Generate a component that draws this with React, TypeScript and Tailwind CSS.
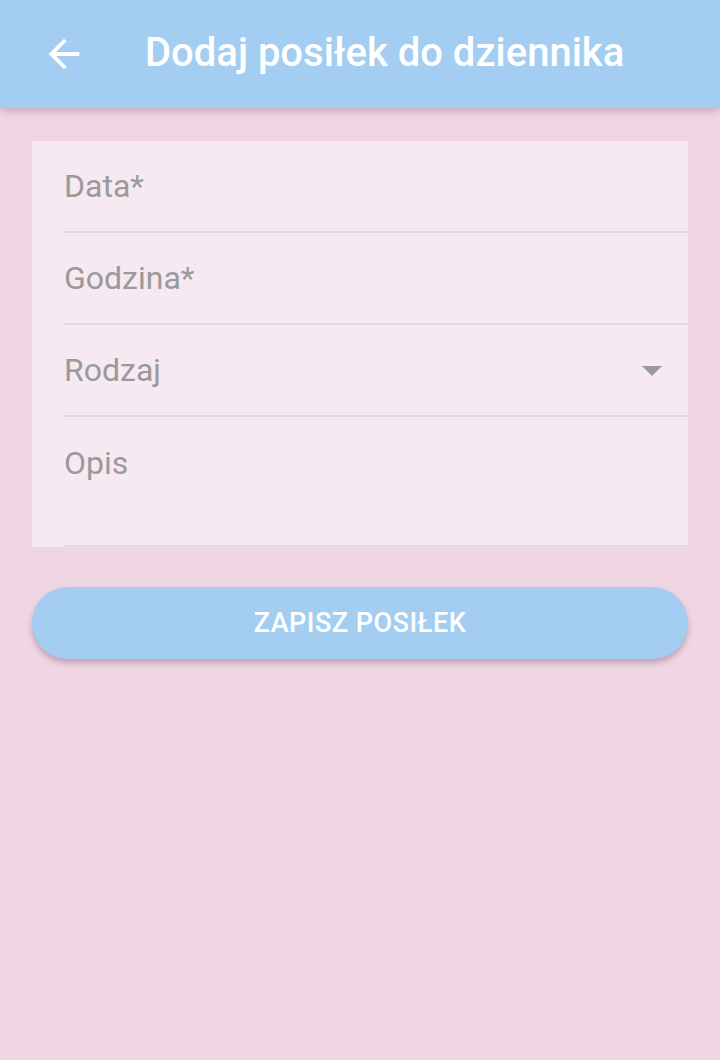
import React from "react";

function Field({ label, tall, dropdown }: { label: string; tall?: boolean; dropdown?: boolean }) {
  return (
    <div className={`ml-8 flex border-b-2 border-[#dedbe0] ${tall ? "h-[130px] items-start pt-[30px]" : "h-[92px] items-center"}`}>
      <span className="flex-1 text-[32px] leading-none text-[#9a9a9a]">{label}</span>
      {dropdown && (
        <svg width="20" height="10" viewBox="0 0 20 10" className="mr-[26px] mt-[2px]">
          <polygon points="0,0 20,0 10,10" fill="#9a9a9a" />
        </svg>
      )}
    </div>
  );
}

export default function App() {
  return (
    <div className="min-h-[1060px] w-[720px] bg-[#f0d6e5]" style={{ fontFamily: "Roboto, 'Noto Sans', sans-serif" }}>
      <div className="relative z-10 flex h-[108px] items-center bg-[#a3cef1] shadow-[0_3px_8px_rgba(120,80,100,0.35)]">
        <svg width="46" height="46" viewBox="0 0 24 24" className="ml-[41px]">
          <path d="M20 11H7.83l5.59-5.59L12 4l-8 8 8 8 1.41-1.41L7.83 13H20v-2z" fill="#ffffff" />
        </svg>
        <h1 className="mb-[2px] ml-[58px] text-[40px] font-medium leading-none text-white">Dodaj posiłek do dziennika</h1>
      </div>
      <div className="px-8 pt-[33px]">
        <div className="bg-[#f6e9f2]">
          <Field label="Data*" />
          <Field label="Godzina*" />
          <Field label="Rodzaj" dropdown />
          <Field label="Opis" tall />
        </div>
        <button className="mt-[40px] flex h-[72px] w-full items-center justify-center rounded-full bg-[#a3cef1] text-[27px] font-medium tracking-[0.5px] text-white shadow-[0_4px_6px_rgba(120,80,100,0.4)]">
          ZAPISZ POSIŁEK
        </button>
      </div>
    </div>
  );
}
